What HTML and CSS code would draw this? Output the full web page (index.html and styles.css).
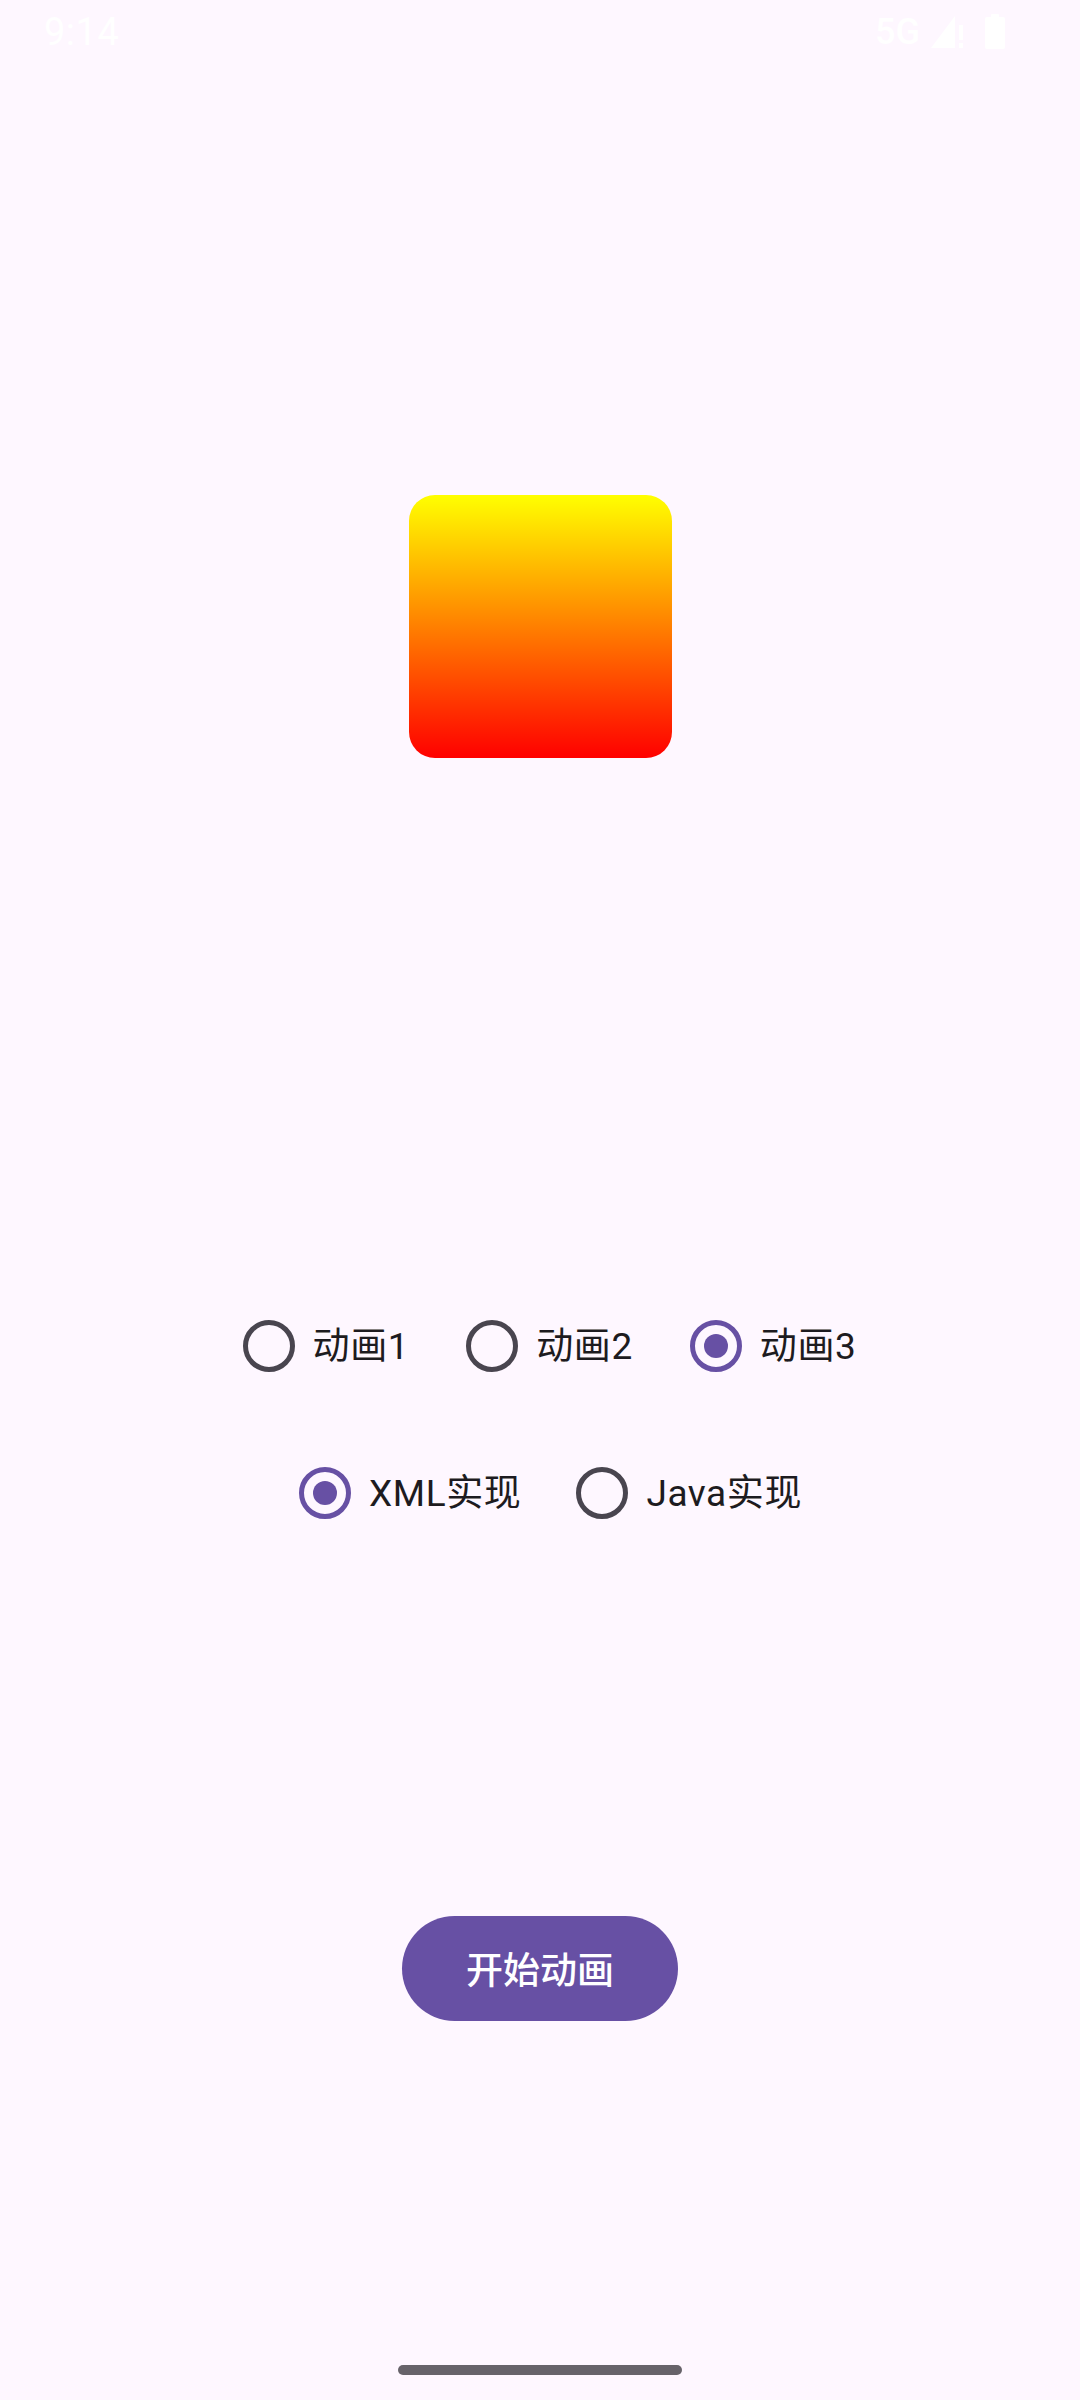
FILE: index.html
```html
<!DOCTYPE html>
<html lang="zh-CN">
<head>
<meta charset="utf-8">
<title>动画</title>
<link rel="stylesheet" href="styles.css">
</head>
<body>
<div class="screen">
  <div class="status-bar">
    <span class="time">9:14</span>
    <div class="status-icons">
      <span class="net">5G</span>
      <svg class="signal" width="34" height="34" viewBox="0 0 34 34">
        <path d="M0 33 L24 1 L24 33 Z" fill="#ffffff"/>
        <rect x="28" y="10" width="4" height="15" fill="#ffffff"/>
        <rect x="28" y="28" width="4" height="5" fill="#ffffff"/>
      </svg>
      <svg class="battery" width="20" height="35" viewBox="0 0 20 35">
        <rect x="6" y="0" width="8" height="4" rx="1" fill="#ffffff"/>
        <rect x="0" y="3" width="20" height="32" rx="2" fill="#ffffff"/>
      </svg>
    </div>
  </div>

  <div class="stage">
    <div class="box"></div>
  </div>

  <div class="radio-row row-anim">
    <label class="radio"><span class="dot"></span><span class="label">动画1</span></label>
    <label class="radio"><span class="dot"></span><span class="label">动画2</span></label>
    <label class="radio"><span class="dot checked"></span><span class="label">动画3</span></label>
  </div>

  <div class="radio-row row-impl">
    <label class="radio"><span class="dot checked"></span><span class="label">XML实现</span></label>
    <label class="radio"><span class="dot"></span><span class="label">Java实现</span></label>
  </div>

  <div class="action">
    <button class="start-btn">开始动画</button>
  </div>

  <div class="nav">
    <div class="handle"></div>
  </div>
</div>
</body>
</html>
```

FILE: styles.css
```css
* {
  box-sizing: border-box;
}

html, body {
  margin: 0;
  padding: 0;
  background: #FEF7FF;
}

body {
  font-family: Roboto, "Noto Sans CJK SC", sans-serif;
  color: #1D1B20;
}

.screen {
  width: 1080px;
  height: 2400px;
  display: flex;
  flex-direction: column;
  overflow: hidden;
}

.status-bar {
  height: 63px;
  display: flex;
  align-items: center;
  justify-content: space-between;
  padding: 0 75px 0 44px;
  color: #ffffff;
}

.time {
  font-size: 38px;
  line-height: 1;
  letter-spacing: 0.5px;
}

.status-icons {
  display: flex;
  align-items: center;
  gap: 10px;
}

.net {
  font-size: 36px;
  font-weight: 500;
  line-height: 1;
  margin-right: 1px;
}

.signal {
  display: block;
  margin-top: 1px;
}

.battery {
  display: block;
  margin-left: 10px;
}

.stage {
  display: flex;
  justify-content: center;
  margin-top: 432px;
}

.box {
  width: 263px;
  height: 263px;
  margin-left: 1px;
  border-radius: 26px;
  background: linear-gradient(to bottom, #FFFF00 0%, #FF0000 100%);
}

.radio-row {
  height: 126px;
  display: flex;
  align-items: center;
  justify-content: center;
  gap: 57px;
  padding-left: 19px;
}

.row-anim {
  margin-top: 525px;
}

.row-impl {
  margin-top: 21px;
  gap: 55px;
  padding-left: 21px;
}

.radio {
  display: flex;
  align-items: center;
  gap: 18px;
}

.dot {
  width: 52px;
  height: 52px;
  border-radius: 50%;
  border: 5px solid #49454F;
  display: flex;
  align-items: center;
  justify-content: center;
  flex: none;
}

.dot.checked {
  border-color: #6750A4;
}

.dot.checked::after {
  content: "";
  width: 24px;
  height: 24px;
  border-radius: 50%;
  background: #6750A4;
}

.label {
  font-size: 37px;
  line-height: 1;
  letter-spacing: 0.6px;
  color: #1D1B20;
}

.action {
  display: flex;
  justify-content: center;
  margin-top: 360px;
}

.start-btn {
  height: 105px;
  padding: 5px 64px 0;
  border: none;
  border-radius: 53px;
  background: #6750A4;
  color: #ffffff;
  font-family: Roboto, "Noto Sans CJK SC", sans-serif;
  font-size: 37px;
  font-weight: 500;
  line-height: 1;
  letter-spacing: 0;
}

.nav {
  display: flex;
  justify-content: center;
  margin-top: 344px;
}

.handle {
  width: 284px;
  height: 10px;
  border-radius: 5px;
  background: #67636A;
}
```
